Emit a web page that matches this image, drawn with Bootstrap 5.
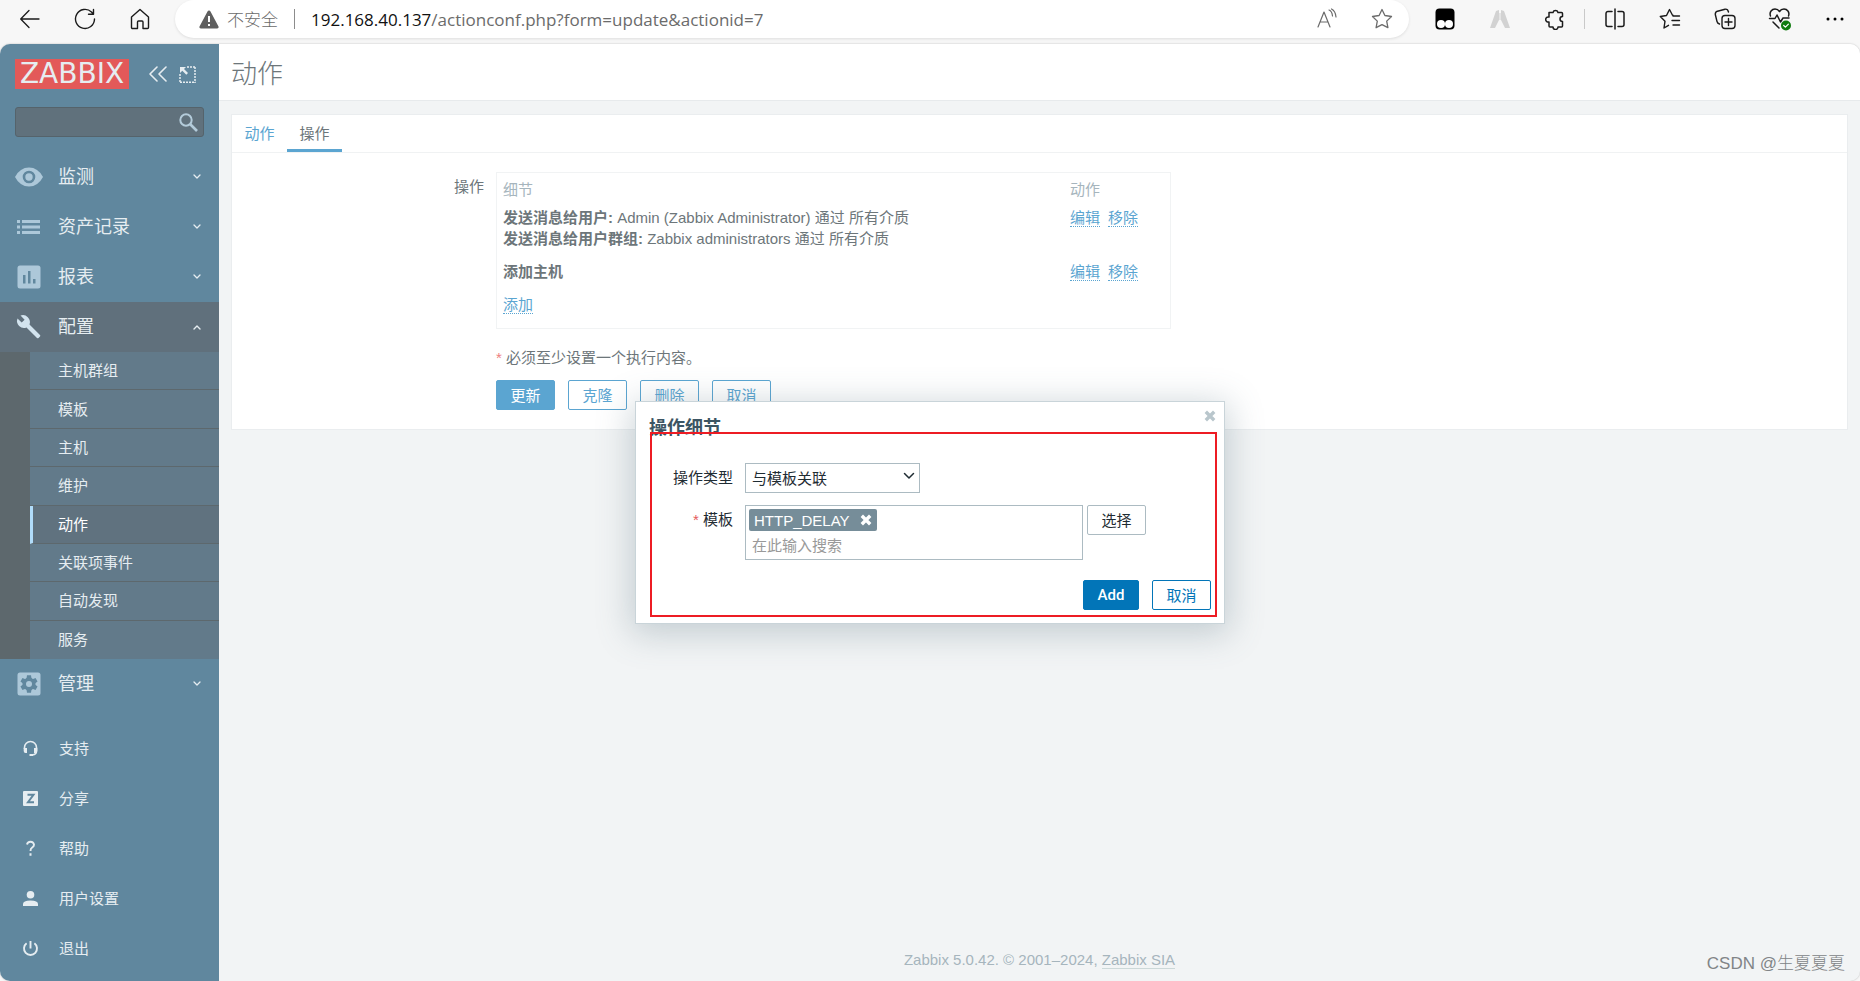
<!DOCTYPE html>
<html lang="zh-CN">
<head>
<meta charset="utf-8">
<meta name="viewport" content="width=device-width, initial-scale=1">
<title>动作</title>
<link href="https://cdn.jsdelivr.net/npm/bootstrap@5.3.0/dist/css/bootstrap.min.css" rel="stylesheet">
<style>
:root{--ink:#6d767a;--blue:#5ba5d1;--page:#f2f4f5;--side:#60879e;--muted:#a6b5bd}
body{font-family:"Liberation Sans","Noto Sans CJK SC",sans-serif;font-size:15px;line-height:21px;color:var(--ink);background:#f7f7f7}
svg{display:block;flex:none}
.line{fill:none;stroke:currentColor;stroke-linecap:round;stroke-linejoin:round}
a{color:var(--blue);text-decoration:none}
/* browser toolbar */
.toolbar{height:44px;padding:0 0 6px 2px;color:#1b1b1b}
.toolbar button{border:0;background:none;padding:0;color:inherit;width:55px;display:flex;justify-content:center}
.omnibox{height:38px;border-radius:19px;background:#fff;box-shadow:0 1px 3px rgba(0,0,0,.1);color:#6b6b6b;font-family:"Open Sans","Noto Sans CJK SC",sans-serif;font-size:17px}
.insecure{font-weight:300}
.bar{width:1px;height:20px;background:#8c8c8c}
.bar.faint{background:#c9c9c9;margin:0 2px}
.extensions{margin-right:-2px}
.host{color:#111}
/* shell */
.shell{border-radius:10px;overflow:hidden;background:var(--page);position:relative;box-shadow:0 0 2px rgba(0,0,0,.25)}
.side{width:219px;background:var(--side);color:#e6edf1;flex:none}
.side a{color:inherit}
.brand{padding:15px 15px 0;gap:20px}
.logo{width:114px;height:30px;background:#e35959;color:#fff;font-family:"DejaVu Sans",sans-serif;font-size:28px;line-height:30px;text-align:center}
.search{height:30px;margin:18px 15px 7px;background:#60717c;border:1px solid #55636b;border-radius:3px;color:#b3cbda}
.search input{background:none;border:0;outline:0;min-width:0;color:#fff}
.search button{border:0;background:none;color:inherit;padding:0 5px}
.item{height:50px;padding-right:18px;font-size:18px}
.ico{width:58px;padding-left:15px;color:#adc8d9}
.ico svg{width:28px;height:28px}
.opened{background:#60707c;color:#fff}
.opened .ico{color:#d3e4ef}
.sub{height:307px;margin-left:30px;display:grid;grid-auto-rows:1fr;font-size:15px}
.strip{background:#5d686d}
.sub a{display:flex;align-items:center;padding-left:28px;background:#627a8a;border-bottom:1px solid #5d686d}
.sub a:last-child{border:0}
.sub a.current{background:#60727f;border-left:3px solid #b0dcfa;padding-left:25px;color:#fff}
.low{height:50px;padding-left:22px;gap:20px;color:#dbe4ea}
/* page */
.head{height:57px;background:#fff;border-bottom:1px solid #e7eaec;padding:3px 12px 0}
.head h1{font-size:26px;line-height:32px;font-weight:300;margin:0}
.panel{margin:13px 12px 0;background:#fff;border:1px solid #eaedef}
.panel form{padding:19px 0}
.tabs{border-bottom:1px solid #f0f2f3}
.tabs a{width:55px;height:37px;line-height:37px;text-align:center}
.tabs a.on{color:var(--ink);border-bottom:3px solid var(--blue)}
.form-label-col{width:252px;flex:none;text-align:right}
.box{width:675px;margin-left:12px;border:1px solid #f1f3f4;padding-bottom:7px}
.box table{width:100%}
.box th,.box td{padding:6px;vertical-align:top}
.box thead th{font-weight:400;color:var(--muted);padding-bottom:1px}
.box .acts{width:106px}
.dot{border-bottom:1px dotted var(--blue)}
.below{margin-left:264px}
.below p{padding:18px 0 12px;margin:0}
.btnrow{gap:13px}
.req{color:#ee8080}
.zbtn{height:30px;min-width:59px;padding:0 13px;line-height:21px;font-size:15px;border-radius:2px;border:1px solid var(--blue);color:var(--blue);background:#fff}
.zbtn.fill{background:var(--blue);color:#fff}
.foot{color:var(--muted);font-size:15px;padding-bottom:11px}
.foot a{color:var(--muted);border-bottom:1px solid #ccd8d8}
.stamp{position:absolute;right:15px;bottom:7px;font-size:17px;line-height:21px;color:#818487;font-weight:300}
/* dialog */
.veil{position:absolute;inset:0;pointer-events:none}
.dlg{pointer-events:auto;position:relative;width:590px;background:#fff;border:1px solid #c9d4d9;box-shadow:0 6px 32px 4px rgba(90,115,130,.3);color:#1f2c33;padding:14px 13px 13px}
.dlg h2{font-size:18px;line-height:24px;font-weight:700;color:#3c5563;margin:0 0 23px}
.dlg-x{position:absolute;top:8px;right:8px;border:0;background:none;padding:0;color:#b9c6cc}
.frame{position:absolute;left:14px;right:7px;top:30px;bottom:6px;border:2px solid #ed1c24;pointer-events:none}
.fields{gap:12px}
.dlabel{width:84px;text-align:right;line-height:30px;flex:none}
.dlabel .req{color:#e45959}
.dlg select{display:block;width:175px;height:30px;border:1px solid #acbbc2;border-radius:0;color:#1f2c33;padding:0 6px;appearance:none;background:none}
.caret{position:absolute;right:5px;top:9px;pointer-events:none}
.multi{width:338px;height:55px;border:1px solid #acbbc2;padding:3px}
.chip{display:flex;width:fit-content;align-items:center;gap:10px;height:22px;background:#768d99;color:#fff;border-radius:2px;padding:0 5px}
.chip button{border:0;background:none;color:#fff;padding:0}
.multi input{display:block;width:100%;border:0;outline:0;padding:0 3px;height:28px}
.multi input::placeholder{color:#999}
.pick{margin-left:-8px}
.dlg .zbtn{border-color:#0275b8;color:#0275b8}
.dlg .zbtn.fill{min-width:56px;background:#0275b8;color:#fff;font-family:Roboto,sans-serif;font-weight:500}
.dlg .zbtn.plain{border-color:#acbbc2;color:#1f2c33}
</style>
</head>
<body class="d-flex flex-column min-vh-100">
<svg class="d-none"><defs>
<symbol id="down" viewBox="0 0 8 6"><path class="line" d="M1 1l3 3 3-3" stroke-width="1.3"/></symbol>
<symbol id="cross" viewBox="0 0 12 12"><path d="M1.800 1.800l8.400 8.400m0-8.400l-8.400 8.400" stroke="currentColor" stroke-width="3.4" stroke-linecap="butt"/></symbol>
</defs></svg>

<header class="toolbar d-flex align-items-center">
  <nav class="d-flex pe-2" aria-label="浏览器">
    <button aria-label="后退"><svg class="line" width="22" height="22" viewBox="0 0 22 22" stroke-width="1.3"><path d="M20 11H2m8-8.500l-8.300 8.500 8.300 8.500"/></svg></button>
    <button aria-label="刷新"><svg class="line" width="22" height="22" viewBox="0 0 22 22" stroke-width="1.400"><path d="M20.500 11a9.500 9.500 0 1 1-3-7l1.800 2M19.500 1.500V6.200H14.500"/></svg></button>
    <button aria-label="主页"><svg class="line" width="20" height="22" viewBox="0 0 20 22" stroke-width="1.400"><path d="M1.500 9L10 1.500 18.500 9v10.500a1 1 0 0 1-1 1H13V14a1 1 0 0 0-1-1H8.500a1 1 0 0 0-1 1v6.500H2.500a1 1 0 0 1-1-1z"/></svg></button>
  </nav>
  <div class="omnibox flex-grow-1 d-flex align-items-center ps-4">
    <svg width="20" height="19" viewBox="0 0 20 19"><path d="M10 .5q1 0 1.500 1l8 15q.6 2-1.300 2H1.800q-1.900 0-1.300-2l8-15Q9 .5 10 .5z" fill="#5f5f5f"/><path d="M9 6h2v6H9zM9 14h2v2H9z" fill="#fff"/></svg>
    <span class="insecure mx-2">不安全</span><span class="bar ms-2"></span>
    <span class="flex-grow-1 ps-3"><span class="host">192.168.40.137</span>/actionconf.php?form=update&amp;actionid=7</span>
    <button aria-label="朗读"><svg class="line" width="22" height="22" viewBox="0 0 22 22" stroke-width="1.200"><path d="M2 19L8 4l6 15M4 14h8M13 2q3 1 3.500 6M15.500 1q4 2 4.500 8"/></svg></button>
    <button aria-label="收藏"><svg class="line" width="22" height="22" viewBox="0 0 22 22" stroke-width="1.300"><path d="M11 1.500l2.900 6 6.600 1-4.800 4.600 1.200 6.600L11 16.600l-5.900 3.100 1.200-6.600L1.500 8.500l6.600-1z"/></svg></button>
  </div>
  <nav class="extensions d-flex align-items-center ps-2" aria-label="扩展">
    <button aria-label="脚本"><svg width="20" height="22" viewBox="0 0 20 22"><rect x=".5" y=".5" width="19" height="21" rx="4" fill="#000"/><circle cx="6" cy="16" r="4" fill="#fff"/><circle cx="14" cy="16" r="4" fill="#fff"/></svg></button>
    <button aria-label="扩展程序"><svg width="22" height="20" viewBox="0 0 22 20"><path d="M7 2l3-1v10l-4 8H1zM12 1l3 1 6 17h-5l-4-8z" fill="#d2d2d2"/><path d="M10 4h2v7h-2z" fill="#e4e4e4"/></svg></button>
    <button aria-label="扩展"><svg class="line" width="20" height="22" viewBox="0 0 20 22" stroke-width="1.500"><path d="M4 4.500h4a2.600 2.600 0 0 1 5 0h3.500a1 1 0 0 1 1 1V8.500a2.500 2.500 0 0 0 0 5V18a1 1 0 0 1-1 1H13a2.500 2.500 0 0 1-5 0H5a1 1 0 0 1-1-1v-4a2.600 2.600 0 1 1 0-5z"/></svg></button>
    <span class="bar faint"></span>
    <button aria-label="分屏"><svg class="line" width="20" height="22" viewBox="0 0 20 22" stroke-width="1.500"><path d="M10 1v20M7 3.500H3a2 2 0 0 0-2 2v11a2 2 0 0 0 2 2h4M13 3.500h4a2 2 0 0 1 2 2v11a2 2 0 0 1-2 2h-4"/></svg></button>
    <button aria-label="收藏夹"><svg class="line" width="22" height="22" viewBox="0 0 22 22" stroke-width="1.400"><path d="M14 7.300h-.5L10.500 1.500l-3 6-6.200 1L6 13.200 5 20l4.500-2.700M14 8h6.500M13 12.500h7.500M14 17h6.500"/></svg></button>
    <button aria-label="集锦"><svg class="line" width="22" height="22" viewBox="0 0 22 22" stroke-width="1.400"><rect x="8" y="7.500" width="13" height="13" rx="3"/><path d="M14.500 10.500v7M11 14h7M5.500 16Q3.500 15.500 3 13.500L1.300 6.500Q1 4 3.500 3.200L11 1.200q2.800-.4 3.500 2.800"/></svg></button>
    <button aria-label="性能"><svg class="line" width="24" height="24" viewBox="0 0 24 24" stroke-width="1.500"><path d="M2.500 9C1 5 4 2 7 2q3 0 4.500 2.500Q13 2 16 2c3 0 6 3 4.500 7M1.500 11.500H7L9 8l3.500 7 2.500-4h6M5 15l6 6"/><circle cx="18" cy="18.500" r="5" fill="#107c10" stroke="none"/><path d="M15.700 18.500l1.700 1.700 3-3" stroke="#fff" stroke-width="1.200"/></svg></button>
    <button aria-label="更多"><svg width="18" height="4" viewBox="0 0 18 4"><circle cx="2" cy="2" r="1.500"/><circle cx="9" cy="2" r="1.500"/><circle cx="16" cy="2" r="1.500"/></svg></button>
  </nav>
</header>

<div class="shell d-flex flex-grow-1">
  <aside class="side d-flex flex-column">
    <div class="brand d-flex align-items-center">
      <a href="#" class="logo" aria-label="ZABBIX">ZABBIX</a>
      <div class="d-flex align-items-center gap-2">
      <a href="#" class="pe-1" aria-label="收起"><svg class="line" width="18" height="16" viewBox="0 0 18 16" stroke-width="1.600"><path d="M8 1L1 8l7 7M17 1l-7 7 7 7"/></svg></a>
      <a href="#" aria-label="全屏"><svg width="17" height="17" viewBox="0 0 17 17"><path d="M8 1h8.300M1 16.200h15.500M1 8v8M16 1v16" stroke="currentColor" stroke-width="1.500" stroke-dasharray="2 1" fill="none"/><path d="M1 1h6L5 3l4 4-1.700 1.700-4-4L1 7z" fill="currentColor"/></svg></a>
      </div>
    </div>
    <form class="search d-flex">
      <input class="flex-grow-1" type="text" aria-label="搜索">
      <button type="button" aria-label="搜索"><svg width="19" height="19" viewBox="0 0 19 19" fill="none" stroke="currentColor" stroke-width="2"><circle cx="7" cy="7" r="5.700"/><path d="M11 11l7 7" stroke-width="2.600"/></svg></button>
    </form>
    <nav class="pt-1 mt-1" aria-label="主菜单">
      <a href="#" class="item d-flex align-items-center"><span class="ico"><svg viewBox="0 0 28 28"><path d="M0 14Q5 4.500 14 4.500T28 14Q23 23.500 14 23.500T0 14z" fill="currentColor"/><circle cx="14" cy="14" r="5" fill="none" stroke="#60879e" stroke-width="2.600"/></svg></span><span class="flex-grow-1">监测</span><svg width="8" height="6"><use href="#down"/></svg></a>
      <a href="#" class="item d-flex align-items-center"><span class="ico"><svg viewBox="0 0 28 28" fill="currentColor"><path d="M2 7h3v3H2zM2 12.500h3v3H2zM2 18h3v3H2zM7 7h18v3H7zM7 12.500h18v3H7zM7 18h18v3H7z"/></svg></span><span class="flex-grow-1">资产记录</span><svg width="8" height="6"><use href="#down"/></svg></a>
      <a href="#" class="item d-flex align-items-center"><span class="ico"><svg viewBox="0 0 28 28"><rect x="2.500" y="2.500" width="23" height="23" rx="2.500" fill="currentColor"/><path d="M8 12h2.500v8.500H8zM13 8h2.500v12.500H13zM18 16h2.500v4.500H18z" fill="#60879e"/></svg></span><span class="flex-grow-1">报表</span><svg width="8" height="6"><use href="#down"/></svg></a>
      <a href="#" class="item opened d-flex align-items-center"><span class="ico"><svg viewBox="0 0 28 28"><path d="M25 22L14.500 11.500A7 7 0 0 0 5.500 2.600L9.600 6.700 6.700 9.600 2.500 5.500A7 7 0 0 0 11.500 14.500L22 25q.8.700 1.500 0L25 23.500q.7-.8 0-1.500z" fill="currentColor"/></svg></span><span class="flex-grow-1">配置</span><svg width="8" height="6" viewBox="0 0 8 6"><path class="line" d="M1 5l3-3 3 3" stroke-width="1.400"/></svg></a>
      <div class="strip"><div class="sub">
        <a href="#">主机群组</a><a href="#">模板</a><a href="#">主机</a><a href="#">维护</a><a href="#" class="current">动作</a><a href="#">关联项事件</a><a href="#">自动发现</a><a href="#">服务</a>
      </div></div>
      <a href="#" class="item d-flex align-items-center"><span class="ico"><svg viewBox="0 0 28 28"><rect x="2.500" y="2.500" width="23" height="23" rx="2.500" fill="currentColor"/><g fill="#60879e"><circle cx="14" cy="14" r="6.500"/><path id="tooth" d="M12 5.300h4l.6 4h-5.200z"/><use href="#tooth" transform="rotate(60 14 14)"/><use href="#tooth" transform="rotate(120 14 14)"/><use href="#tooth" transform="rotate(180 14 14)"/><use href="#tooth" transform="rotate(240 14 14)"/><use href="#tooth" transform="rotate(300 14 14)"/></g><circle cx="14" cy="14" r="3" fill="currentColor"/></svg></span><span class="flex-grow-1">管理</span><svg width="8" height="6"><use href="#down"/></svg></a>
    </nav>
    <nav class="mt-auto pb-2" aria-label="用户菜单">
      <a href="#" class="low d-flex align-items-center"><svg width="17" height="17" viewBox="0 0 17 17"><path d="M2.500 9V7.500a6 6 0 0 1 12 0V11q0 3.500-4 4" fill="none" stroke="currentColor" stroke-width="1.600"/><path d="M1.700 8H5v5H3.500Q1.700 13 1.700 11zM12 8h3.300v3q0 2-1.800 2H12zM7.500 14h3.500v2H7.500z" fill="currentColor"/></svg>支持</a>
      <a href="#" class="low d-flex align-items-center"><svg width="17" height="17" viewBox="0 0 17 17"><rect x="1" y="1" width="15" height="15" rx="1" fill="currentColor"/><path d="M5.500 4.800h6L6 12.200h6" fill="none" stroke="#60879e" stroke-width="2"/></svg>分享</a>
      <a href="#" class="low d-flex align-items-center"><svg width="17" height="17" viewBox="0 0 17 17"><path d="M5 4.500Q5.500 1.700 8.500 1.700T12 4.700Q12 6.300 10.200 7.500T8.500 11" fill="none" stroke="currentColor" stroke-width="1.900"/><path d="M7.500 13.200h2v2.500h-2z" fill="currentColor"/></svg>帮助</a>
      <a href="#" class="low d-flex align-items-center"><svg width="17" height="17" viewBox="0 0 17 17" fill="currentColor"><circle cx="8.500" cy="4.800" r="3.800"/><path d="M1 16v-2q0-3.500 7.500-3.500T16 14v2z"/></svg>用户设置</a>
      <a href="#" class="low d-flex align-items-center"><svg width="17" height="17" viewBox="0 0 17 17" fill="none" stroke="currentColor" stroke-width="1.900"><path d="M8.500 1v7.500M4.600 3.300a6.500 6.500 0 1 0 7.800 0"/></svg>退出</a>
    </nav>
  </aside>

  <main class="flex-grow-1 d-flex flex-column">
    <div class="head d-flex align-items-center"><h1>动作</h1></div>
    <section class="panel">
      <nav class="tabs d-flex"><a href="#">动作</a><a href="#" class="on">操作</a></nav>
      <form>
        <div class="d-flex">
          <span class="form-label-col pt-1">操作</span>
          <div class="box">
            <table>
              <thead><tr><th>细节</th><th class="acts">动作</th></tr></thead>
              <tbody>
                <tr><td><b>发送消息给用户:</b> Admin (Zabbix Administrator) 通过 所有介质<br><b>发送消息给用户群组:</b> Zabbix administrators 通过 所有介质</td><td><a href="#" class="dot me-2">编辑</a><a href="#" class="dot">移除</a></td></tr>
                <tr><td><b>添加主机</b></td><td><a href="#" class="dot me-2">编辑</a><a href="#" class="dot">移除</a></td></tr>
                <tr><td colspan="2"><a href="#" class="dot">添加</a></td></tr>
              </tbody>
            </table>
          </div>
        </div>
        <div class="below">
          <p><span class="req">*</span> 必须至少设置一个执行内容。</p>
          <div class="btnrow d-flex">
            <button type="button" class="zbtn fill">更新</button><button type="button" class="zbtn">克隆</button><button type="button" class="zbtn">删除</button><button type="button" class="zbtn">取消</button>
          </div>
        </div>
      </form>
    </section>
    <footer class="foot mt-auto text-center">Zabbix 5.0.42. © 2001–2024, <a href="#">Zabbix SIA</a></footer>
  </main>
  <div class="stamp">CSDN @生夏夏夏</div>

  <div class="veil d-flex align-items-center justify-content-center">
    <div class="dlg" role="dialog" aria-labelledby="dt">
      <h2 id="dt">操作细节</h2>
      <button class="dlg-x" aria-label="关闭"><svg width="12" height="12"><use href="#cross"/></svg></button>
      <div class="fields d-flex flex-column">
        <div class="fields d-flex">
          <label class="dlabel" for="type">操作类型</label>
          <div class="position-relative">
            <select id="type"><option>与模板关联</option></select>
            <svg class="caret" width="12" height="9" viewBox="0 0 12 9"><path class="line" d="M1.500 1.500L6 6l4.500-4.500" stroke-width="1.500"/></svg>
          </div>
        </div>
        <div class="fields d-flex align-items-start">
          <label class="dlabel" for="tpl"><span class="req">*</span> 模板</label>
          <div class="multi">
            <span class="chip">HTTP_DELAY<button aria-label="移除 HTTP_DELAY"><svg width="12" height="12"><use href="#cross"/></svg></button></span>
            <input id="tpl" type="text" placeholder="在此输入搜索">
          </div>
          <button class="zbtn plain pick">选择</button>
        </div>
      </div>
      <div class="btnrow d-flex justify-content-end pt-3 mt-1">
        <button class="zbtn fill">Add</button><button class="zbtn">取消</button>
      </div>
      <div class="frame"></div>
    </div>
  </div>
</div>
<script src="https://cdn.jsdelivr.net/npm/bootstrap@5.3.0/dist/js/bootstrap.bundle.min.js"></script>
</body>
</html>
